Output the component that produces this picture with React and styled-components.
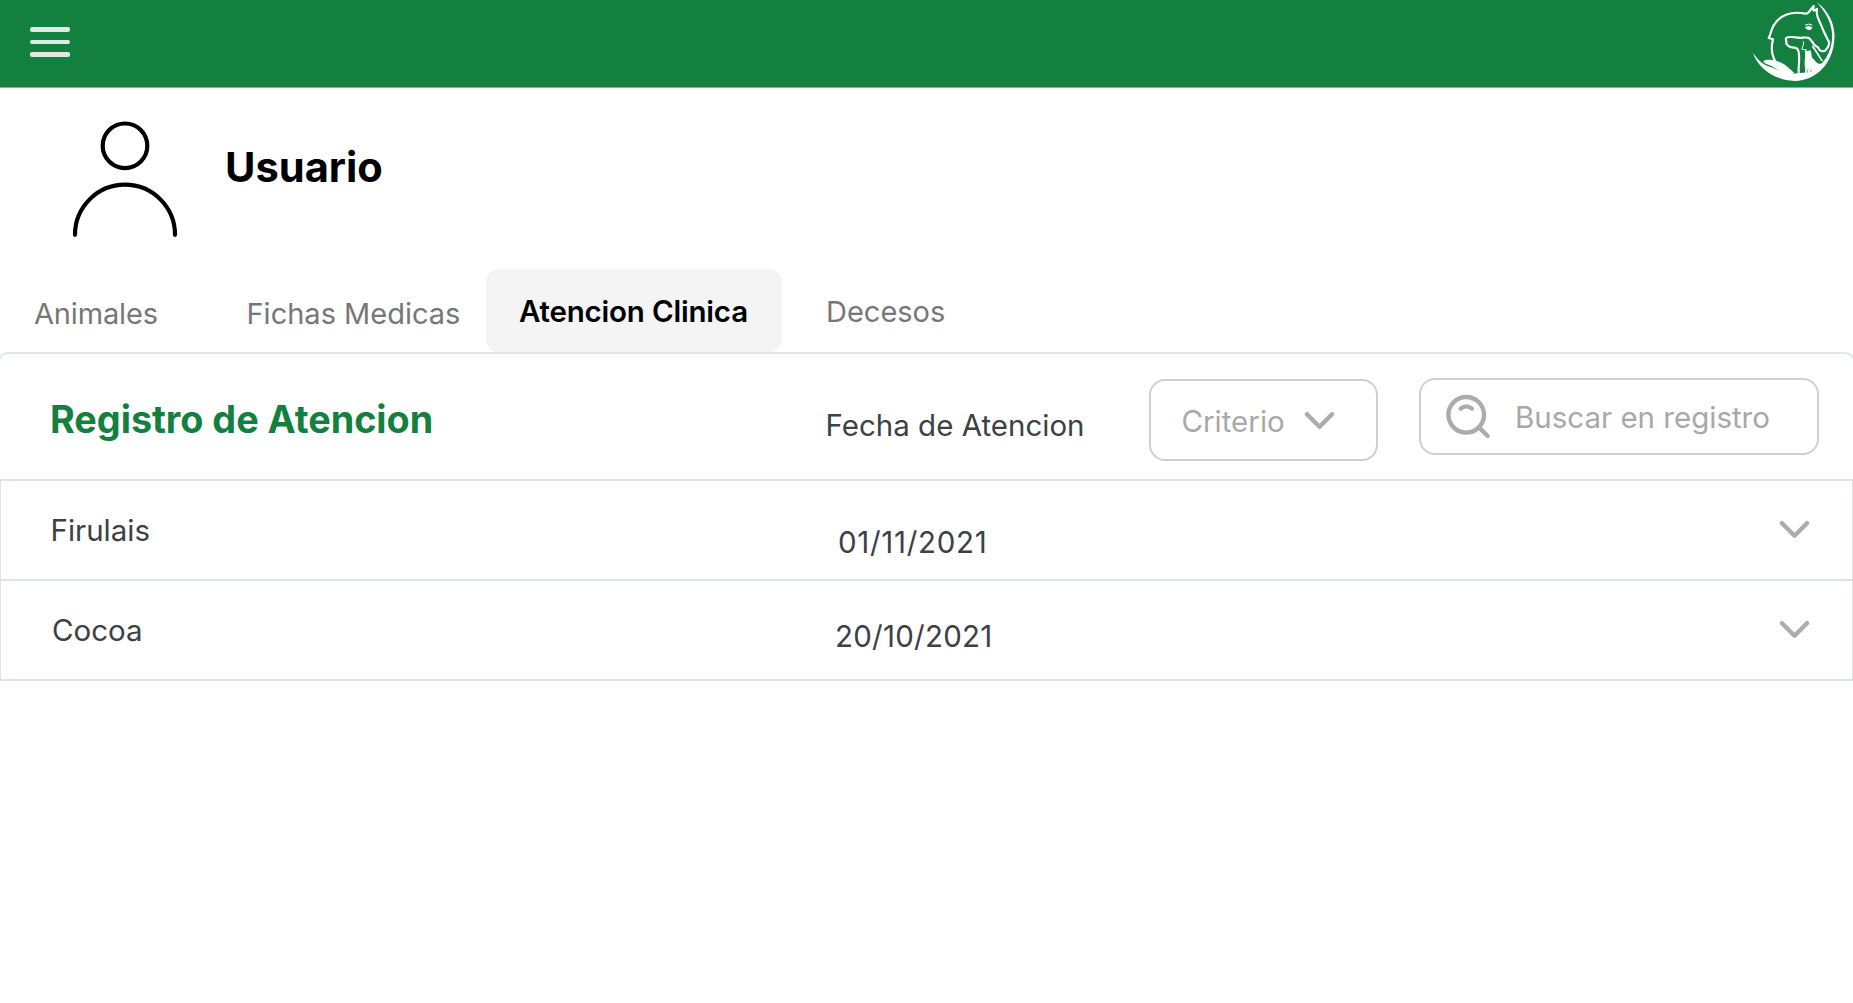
import React from "react";
import styled, { createGlobalStyle } from "styled-components";

const GlobalStyle = createGlobalStyle`
  * { box-sizing: border-box; }
  body {
    margin: 0;
    background: #fff;
    font-family: Inter, "Liberation Sans", sans-serif;
    overflow: hidden;
  }
`;

const Page = styled.main`
  display: flex;
  flex-direction: column;
  width: 100%;
  height: 1003px;
  background: #fff;
`;

const TopBar = styled.header`
  display: flex;
  justify-content: space-between;
  align-items: flex-start;
  height: 88px;
  background: #148040;
  border-bottom: 1px solid #7cb895;
`;

const MenuButton = styled.button`
  display: flex;
  flex-direction: column;
  gap: 8px;
  margin: 27px 0 0 30px;
  padding: 0;
  border: 0;
  background: none;
`;

const MenuBar = styled.span`
  width: 40px;
  height: 4.5px;
  border-radius: 2px;
  background: #e0eae2;
`;

const Profile = styled.section`
  display: flex;
  align-items: flex-start;
  height: 181px;
  padding: 32px 0 0 70px;
`;

const UserName = styled.h1`
  margin: 21px 0 0;
  padding-left: 39px;
  font-size: 41.6px;
  font-weight: 700;
  line-height: 52px;
  color: #000;
`;

const Tabs = styled.nav`
  display: grid;
  grid-template-columns: 246px 240px 296px 1fr;
  height: 83px;
`;

const Tab = styled.a`
  display: flex;
  align-items: flex-start;
  padding: ${(p) => p.$top}px 0 0 ${(p) => p.$inset}px;
  border-radius: 13px;
  background: ${(p) => (p.$active ? "#f4f4f4" : "transparent")};
  color: ${(p) => (p.$active ? "#000" : "#777")};
  font-size: ${(p) => (p.$active ? 29.5 : 29)}px;
  font-weight: ${(p) => (p.$active ? 600 : 400)};
  letter-spacing: ${(p) => p.$track || 0}px;
  line-height: 40px;
  white-space: nowrap;
`;

const Panel = styled.section`
  display: flex;
  flex-direction: column;
`;

const PanelHeader = styled.div`
  display: grid;
  grid-template-columns: 774.5px 323px 270.5px 400px;
  align-items: start;
  height: 127px;
  margin: 0 -2px;
  padding-left: 51px;
  border: 2px solid #e1e5e8;
  border-bottom: 0;
  border-radius: 10px 10px 0 0;
`;

const PanelTitle = styled.h2`
  margin: 45px 0 0 -1px;
  color: #148040;
  font-size: 37.8px;
  font-weight: 700;
  letter-spacing: -0.03px;
  line-height: 40px;
`;

const ColumnLabel = styled.span`
  margin-top: 51px;
  color: #3c4146;
  font-size: 29.5px;
  line-height: 40px;
`;

const Control = styled.div`
  display: flex;
  align-items: center;
  border: 2px solid #d0d0d0;
  border-radius: 16px;
  color: #a8a8a8;
  font-size: 29.5px;
  line-height: 40px;
  white-space: nowrap;
`;

const Criteria = styled(Control)`
  gap: 19px;
  width: 229px;
  height: 82px;
  margin-top: 25px;
  padding: 1px 0 0 31px;
`;

const Search = styled(Control)`
  gap: 24px;
  width: 400px;
  height: 77px;
  margin-top: 24px;
  padding-left: 24px;
`;

const Row = styled.div`
  display: grid;
  grid-template-columns: 836px 1fr 74px;
  align-items: start;
  height: ${(p) => (p.$first ? 102 : 100)}px;
  border: 1px solid #dfe3e7;
  border-width: ${(p) => (p.$first ? 2 : 0)}px 1px 2px;
`;

const Cell = styled.span`
  margin: ${(p) => 29 + (p.$drop || 0)}px 0 0 ${(p) => p.$inset || 0}px;
  color: #3c4146;
  font-size: 29.5px;
  letter-spacing: ${(p) => p.$track || 0}px;
  line-height: 40px;
`;

const Toggle = styled.button`
  display: flex;
  margin: 39px 0 0;
  padding: 0 0 0 1px;
  border: 0;
  background: none;
`;

const Chevron = () => (
  <svg width="31" height="19" viewBox="0 0 31 19" fill="none">
    <path d="M3 3.2 15.5 15.7 28 3.2" stroke="#acacac" strokeWidth="4.4" strokeLinecap="round" strokeLinejoin="round" />
  </svg>
);

const SearchIcon = () => (
  <svg width="46" height="46" viewBox="0 0 46 46" fill="none" stroke="#acacac" strokeLinecap="round">
    <circle cx="21.2" cy="20.8" r="17.8" strokeWidth="4.4" />
    <path d="M15.6 14.6Q21.2 10 27 14.6" strokeWidth="4.2" />
    <path d="M35 34.4 42.6 42" strokeWidth="4.4" />
  </svg>
);

const UserIcon = () => (
  <svg width="116" height="120" viewBox="70 120 116 120" fill="none" stroke="#000" strokeWidth="4.2" strokeLinecap="round">
    <circle cx="125" cy="145.8" r="22.3" />
    <path d="M75 234.8A50 50.1 0 0 1 175 234.8" />
  </svg>
);

const Logo = () => (
  <svg width="113" height="87" viewBox="0 0 339 261" fill="none" stroke="#fff" strokeWidth="6.5" strokeLinejoin="round" strokeLinecap="round">
    <path d="M106 184C96 167 92 145 99 118L86 114C93 103 92 91 101 76C122 43 157 33 197 41C203 43 207 36 212 29L221 18C220 27 218 33 224 31L231 27C226 48 237 59 244 77C250 94 257 106 266 124C270 136 264 144 257 151C252 156 242 154 237 148C236 141 232 141 227 138C222 134 219 132 218 127" />
    <path d="M218 128C213 120 209 113 202 113C193 111 184 115 174 113C160 111 143 110 138 114C136 119 140 123 139 130C144 142 154 142 164 143C173 144 177 153 177 165C179 184 175 198 176 217" />
    <path d="M190 125C193 133 188 140 185 147C188 150 194 148 200 150" strokeWidth="3" />
    <path d="M218 139C226 151 235 165 246 182" strokeWidth="5" />
    <path d="M197 82Q206 76 216 83Q212 92 203 88Z" fill="#fff" strokeWidth="3" />
    <path d="M196 75Q206 69 216 75" strokeWidth="3" />
    <path d="M39 158C53 178 64 190 85 199C106 205 126 219 143 219C156 223 166 220 176 219L194 218C198 208 194 201 194 194C193 178 197 168 195 157C193 151 196 150 201 154L212 151C216 161 213 167 217 174C226 181 228 190 238 191C248 192 252 180 258 174C272 150 278 126 276 100C274 67 256 36 231 7C269 35 287 79 283 119C279 190 229 241 164 243C103 242 51 200 39 158Z" fill="#fff" stroke="none" />
    <path d="M70 184C78 177 96 179 108 183C128 186 146 202 164 220L140 226C119 216 101 199 81 193C76 191 71 188 70 184Z" fill="#fff" stroke="none" />
    <path d="M204 207Q199 211 202 217M213 209Q210 213 213 216M232 183Q239 195 248 186" stroke="#148040" strokeWidth="2" />
  </svg>
);

const TABS = [
  { label: "Animales", inset: 34, top: 25, track: -0.15 },
  { label: "Fichas Medicas", inset: 0.5, top: 25 },
  { label: "Atencion Clinica", inset: 33, top: 22, active: true, track: -0.2 },
  { label: "Decesos", inset: 44, top: 23 },
];

const RECORDS = [
  { name: "Firulais", date: "01/11/2021", inset: 49.5, dateInset: 1, drop: 12, track: 0.7 },
  { name: "Cocoa", date: "20/10/2021", inset: 51, dateInset: -2, drop: 6, track: 0.25 },
];

export default function App() {
  return (
    <Page>
      <GlobalStyle />
      <TopBar>
        <MenuButton aria-label="Menu">
          <MenuBar />
          <MenuBar />
          <MenuBar />
        </MenuButton>
        <Logo />
      </TopBar>
      <Profile>
        <UserIcon />
        <UserName>Usuario</UserName>
      </Profile>
      <Tabs>
        {TABS.map((t) => (
          <Tab key={t.label} $inset={t.inset} $top={t.top} $active={t.active} $track={t.track}>
            {t.label}
          </Tab>
        ))}
      </Tabs>
      <Panel>
        <PanelHeader>
          <PanelTitle>Registro de Atencion</PanelTitle>
          <ColumnLabel>Fecha de Atencion</ColumnLabel>
          <Criteria>
            Criterio
            <Chevron />
          </Criteria>
          <Search>
            <SearchIcon />
            Buscar en registro
          </Search>
        </PanelHeader>
        {RECORDS.map((r, i) => (
          <Row key={r.name} $first={i === 0}>
            <Cell $inset={r.inset}>{r.name}</Cell>
            <Cell $inset={r.dateInset} $drop={r.drop} $track={r.track}>
              {r.date}
            </Cell>
            <Toggle aria-label="Abrir">
              <Chevron />
            </Toggle>
          </Row>
        ))}
      </Panel>
    </Page>
  );
}
